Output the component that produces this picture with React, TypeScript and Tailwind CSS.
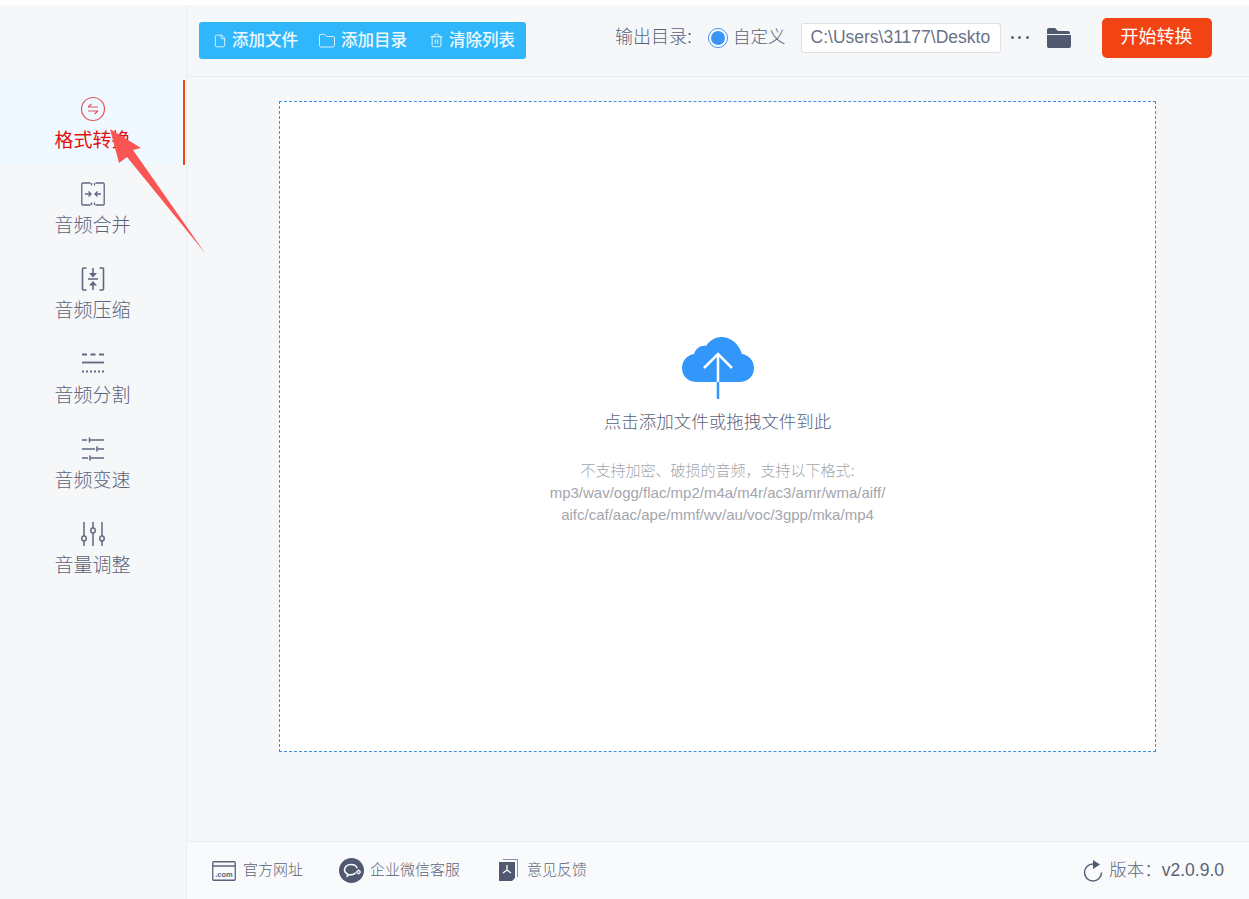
import { File, Folder, Trash2 } from "lucide-react";

const font = "font-['Liberation_Sans','Noto_Sans_CJK_SC',sans-serif]";

const iconProps = {
    width: 26,
    height: 26,
    viewBox: "0 0 26 26",
    fill: "none",
    stroke: "#5f6880",
    strokeWidth: 1.5,
};

function SwapIcon() {
    return (
        <svg {...iconProps} stroke="#e0565a" strokeWidth={1.2}>
            <circle cx="13" cy="13" r="11.500" />
            <path d="M8 11h10M8 11l3.500-3M18 15H8M18 15l-3.500 3" />
        </svg>
    );
}

function MergeIcon() {
    return (
        <svg {...iconProps} strokeWidth={1.3}>
            <path d="M10.500 2H2.800a1 1 0 0 0-1 1v20a1 1 0 0 0 1 1h7.700M15.500 2h7.700a1 1 0 0 1 1 1v20a1 1 0 0 1-1 1h-7.700" />
            <path d="M11.500 2v2.500M11.500 21.500V24M14.500 2v2.500M14.500 21.500V24" />
            <path d="M5 13h6M8.500 10.500l2.500 2.500-2.500 2.500M21 13h-6M17.500 10.500L15 13l2.500 2.500" />
        </svg>
    );
}

function CompressIcon() {
    return (
        <svg {...iconProps} strokeWidth={1.6}>
            <path d="M6.500 2H3.500a1 1 0 0 0-1 1v20a1 1 0 0 0 1 1h3M19.500 2h3a1 1 0 0 1 1 1v20a1 1 0 0 1-1 1h-3" />
            <path d="M13 2v5M8 13h10M13 24v-5" />
            <path d="M9 7h8l-4 4.500zM9 19.500h8L13 15z" fill="#5f6880" stroke="none" />
        </svg>
    );
}

function SplitIcon() {
    return (
        <svg {...iconProps}>
            <path d="M2 3.500h22" strokeDasharray="5 3.500" strokeWidth={1.8} />
            <path d="M2 11.500h22" strokeWidth={1.8} />
            <path d="M2 20.500h22" strokeDasharray="2 2" strokeWidth={1.8} />
        </svg>
    );
}

function SpeedIcon() {
    return (
        <svg {...iconProps} strokeWidth={1.6}>
            <path d="M2 4h5M10 4h14M9.500 1.500v5M2 13h13M18 13h6M17 10.500v5M2 22h6M11 22h13M10 19.500v5" />
        </svg>
    );
}

function VolumeIcon() {
    return (
        <svg {...iconProps}>
            <path d="M4 1v14M4 20v5M13 1v6M13 12v13M22 1v14M22 20v5" />
            <rect x="1.800" y="15" width="4.400" height="5" rx="2.200" />
            <rect x="10.800" y="7" width="4.400" height="5" rx="2.200" />
            <rect x="19.800" y="15" width="4.400" height="5" rx="2.200" />
        </svg>
    );
}

const navItems = [
    { label: "格式转换", icon: <SwapIcon />, active: true },
    { label: "音频合并", icon: <MergeIcon /> },
    { label: "音频压缩", icon: <CompressIcon /> },
    { label: "音频分割", icon: <SplitIcon /> },
    { label: "音频变速", icon: <SpeedIcon /> },
    { label: "音量调整", icon: <VolumeIcon /> },
];

function Sidebar() {
    return (
        <aside className="w-[187px] shrink-0 border-r border-[#ebedf0] bg-[#f6f7f9] pt-[75px]">
            {navItems.map((item) => (
                <div
                    key={item.label}
                    className={`flex h-[85px] w-[185px] flex-col items-center pt-[16px] ${item.active ? "bg-[#f0f9ff] text-[#e01010] shadow-[inset_-2px_0_0_#f2431a]" : "text-[#5a637a]"}`}
                >
                    <div className="flex h-[26px] items-center">{item.icon}</div>
                    <span className={`mt-[6px] text-[19px] leading-[26px] ${item.active ? "font-normal" : "font-light"}`}>
                        {item.label}
                    </span>
                </div>
            ))}
        </aside>
    );
}

function Toolbar() {
    return (
        <header className="flex h-[72px] items-center border-b border-[#ebedf0] pl-[12px]">
            <div className="flex h-[37px] w-[327px] shrink-0 items-center rounded-[3px] bg-[#30b6fa] pl-[14px] text-[16.500px] font-medium text-[#eef9ff]">
                <File size={14} strokeWidth={1.5} />
                <span className="ml-[5px]">添加文件</span>
                <Folder size={18} strokeWidth={1.2} className="ml-[20px]" />
                <span className="ml-[5px]">添加目录</span>
                <Trash2 size={15} strokeWidth={1.5} className="ml-[22px]" />
                <span className="ml-[5px]">清除列表</span>
            </div>
            <div className="mb-[6px] flex items-center">
                <span className="ml-[89px] text-[18px] font-light text-[#5a637a]">输出目录:</span>
                <span className="ml-[16px] flex h-[20px] w-[20px] items-center justify-center rounded-full border border-[#3a95f5] bg-white">
                    <span className="h-[14px] w-[14px] rounded-full bg-[#3a95f5]" />
                </span>
                <span className="ml-[5px] text-[17.500px] font-light text-[#5a637a]">自定义</span>
                <div className="ml-[15px] flex h-[30px] w-[200px] items-center overflow-hidden rounded-[3px] border border-[#dcdfe6] bg-white pl-[9px] text-[17.500px] whitespace-nowrap text-[#6a7287]">
                    C:\Users\31177\Deskto
                </div>
                <div className="ml-[9px] flex w-[20px] justify-between px-[1px]">
                    <span className="h-[3px] w-[3px] rounded-full bg-[#5a637a]" />
                    <span className="h-[3px] w-[3px] rounded-full bg-[#5a637a]" />
                    <span className="h-[3px] w-[3px] rounded-full bg-[#5a637a]" />
                </div>
                <svg width="26" height="22" viewBox="0 0 26 22" className="ml-[16px]">
                    <path
                        d="M1 3a2 2 0 0 1 2-2h6l3 3h10a2 2 0 0 1 2 2v1H1zM1 8h24v11a2 2 0 0 1-2 2H3a2 2 0 0 1-2-2z"
                        fill="#50596f"
                    />
                </svg>
                <button className="ml-[30px] h-[40px] w-[110px] rounded-[5px] bg-[#f24314] text-[18px] text-white">
                    开始转换
                </button>
            </div>
        </header>
    );
}

function DropZone() {
    return (
        <div className="flex flex-1 items-start justify-center pt-[24px] pr-[1px]">
            <div className="flex h-[651px] w-[877px] flex-col items-center border border-dashed border-[#3a8eea] bg-white pt-[234px]">
                <svg width="74" height="64" viewBox="0 0 74 64">
                    <path
                        d="M16 46C7 46 1 40 1 32c0-7 5-13 12-14 2-6 7-9 12-8C29 4 35 1 40 1c10 0 18 7 21 17 7 1 12 7 12 14 0 8-6 14-15 14z"
                        fill="#3396fb"
                    />
                    <path d="M37 46V18" stroke="#fff" strokeWidth="2.500" />
                    <path d="M37 46v17" stroke="#3396fb" strokeWidth="2.500" />
                    <path d="M23 32l14-14 14 14" stroke="#fff" strokeWidth="2.500" fill="none" />
                </svg>
                <p className="mt-[9px] text-[17.500px] leading-[26px] font-light text-[#5a637a]">
                    点击添加文件或拖拽文件到此
                </p>
                <div className="mt-[25px] text-center text-[15px] leading-[22px] font-light text-[#a3a6ad]">
                    <p>{"不支持加密、破损的音频\uFF0C支持以下格式:"}</p>
                    <p>mp3/wav/ogg/flac/mp2/m4a/m4r/ac3/amr/wma/aiff/</p>
                    <p>aifc/caf/aac/ape/mmf/wv/au/voc/3gpp/mka/mp4</p>
                </div>
            </div>
        </div>
    );
}

function Footer() {
    return (
        <footer className="flex h-[58px] items-center border-t border-[#ebedf0] bg-[#f9fafb] pr-[25px] pl-[25px] text-[15px] font-light text-[#5a637a]">
            <svg width="24" height="20" viewBox="0 0 24 20" fill="none" stroke="#5a637a">
                <rect x="0.750" y="0.750" width="22.500" height="18.500" rx="1" strokeWidth="1.300" />
                <path d="M1 5h22" strokeWidth="1.500" />
                <text x="12" y="16" textAnchor="middle" fontSize="7.500" fontWeight="700" fill="#5a637a" stroke="none">
                    .com
                </text>
            </svg>
            <span className="ml-[7px]">官方网址</span>
            <svg width="25" height="25" viewBox="0 0 25 25" className="ml-[36px]">
                <circle cx="12.500" cy="12.500" r="12.500" fill="#50596f" />
                <path d="M12 6.500c-4 0-6.500 2.500-6.500 5.200 0 2 1.200 3.500 3 4.300l-.3 2 2.300-1.300c.5.100 1 .1 1.500.1 2 0 3.700-.7 4.700-2" fill="none" stroke="#fff" strokeWidth="1.500" />
                <path d="M12 6.500c3 0 5.500 1.600 6.200 3.800" fill="none" stroke="#fff" strokeWidth="1.500" />
                <path d="M19.500 12l2 2-2 2-2-2z" fill="none" stroke="#fff" strokeWidth="1.200" />
            </svg>
            <span className="ml-[6px]">企业微信客服</span>
            <svg width="19" height="23" viewBox="0 0 19 23" className="ml-[39px]">
                <path d="M4 0h15v18h-1V1H4z" fill="#8a91a3" />
                <path d="M0 3h16v16l-3 3H0z" fill="#50596f" />
                <path d="M8 6v5M8 11l-4 3M8 11l4 3" stroke="#fff" strokeWidth="1.300" fill="none" />
            </svg>
            <span className="ml-[9px]">意见反馈</span>
            <div className="ml-auto flex items-center text-[17.500px]">
                <svg width="20" height="22" viewBox="0 0 20 22" fill="none">
                    <path d="M10 4a8.500 8.500 0 1 0 8.500 8.500" stroke="#5a637a" strokeWidth="1.500" />
                    <path d="M10 0l7 4.500-7 4.500z" fill="#50596f" />
                </svg>
                <span className="ml-[6px]">{"版本\uFF1Av2.0.9.0"}</span>
            </div>
        </footer>
    );
}

export default function App() {
    return (
        <div className={`relative flex h-[899px] w-[1249px] overflow-hidden bg-white pt-[5px] ${font}`}>
            <Sidebar />
            <main className="flex flex-1 flex-col bg-[#f6f7f9]">
                <Toolbar />
                <DropZone />
                <Footer />
            </main>
            {/* red annotation arrow over the sidebar */}
            <svg width="1249" height="899" className="pointer-events-none absolute top-0 left-0">
                <polygon points="110,129 141,148 133,150 205,253 127,157 119,163" fill="#f95555" />
            </svg>
        </div>
    );
}
